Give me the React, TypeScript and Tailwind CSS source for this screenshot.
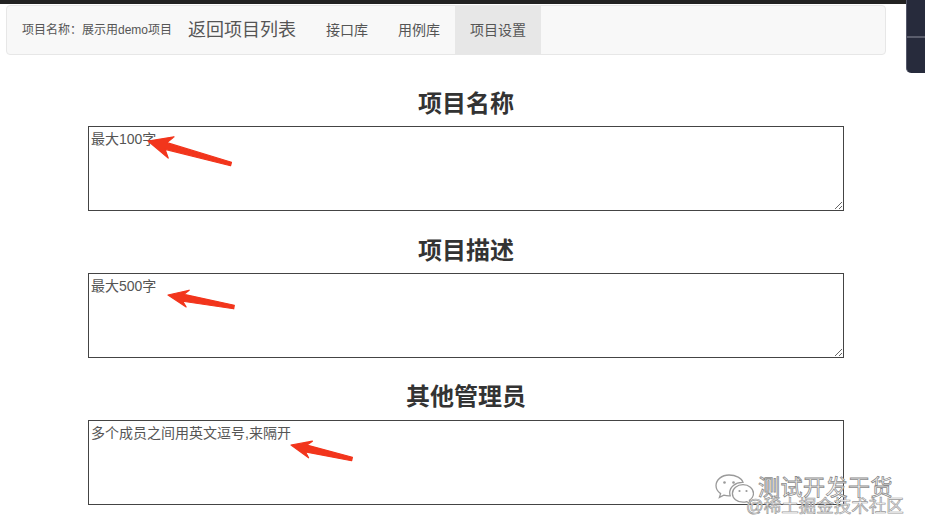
import React from 'react'

const cjk = '[font-family:"Liberation_Sans","Noto_Sans_CJK_SC",sans-serif]'

type Pt = [number, number]

// red annotation arrow, tip -> tail
function arrowPoints(tip: Pt, tail: Pt, head = 24, headW = 20) {
  const dx = tail[0] - tip[0]
  const dy = tail[1] - tip[1]
  const len = Math.hypot(dx, dy)
  const ux = dx / len
  const uy = dy / len
  const vx = -uy
  const vy = ux
  const p = (a: number, b: number) => `${tip[0] + ux * a + vx * b},${tip[1] + uy * a + vy * b}`
  return [
    p(0, 0),
    p(head, headW / 2),
    p(head * 0.78, 3.5),
    p(len, 1.8),
    p(len, -1.8),
    p(head * 0.78, -3.5),
    p(head, -headW / 2),
  ].join(' ')
}

const arrows: { tip: Pt; tail: Pt; head: number; w: number }[] = [
  { tip: [148, 141], tail: [231, 164], head: 24, w: 22 },
  { tip: [168, 295], tail: [234, 307], head: 20, w: 17 },
  { tip: [291, 445], tail: [352, 459], head: 20, w: 17 },
]

const fields = [
  { title: '项目名称', hint: '最大100字', gap: 'mt-[36px] mb-[9px]' },
  { title: '项目描述', hint: '最大500字', gap: 'mt-[27px] mb-[9px]' },
  { title: '其他管理员', hint: '多个成员之间用英文逗号,来隔开', gap: 'mt-[26px] mb-[10px]' },
]

export default function App() {
  return (
    <div className={`relative w-[925px] h-[532px] overflow-hidden bg-white ${cjk}`}>
      <div className="h-[4px] bg-[#222]" />

      {/* navbar */}
      <div className="ml-[6px] mt-px w-[880px] h-[50px] border border-[#e7e7e7] rounded-[4px] bg-[#f8f8f8] flex items-stretch text-[#555]">
        <div className="pl-[15px] flex items-center text-[12px]">项目名称：展示用demo项目</div>
        <div className="ml-[16px] pr-[15px] flex items-center text-[18px]">返回项目列表</div>
        <div className="px-[15px] flex items-center text-[14px]">接口库</div>
        <div className="px-[15px] flex items-center text-[14px]">用例库</div>
        <div className="px-[15px] flex items-center text-[14px] bg-[#e7e7e7]">项目设置</div>
      </div>

      {/* form */}
      <div className="ml-[88px] w-[756px]">
        {fields.map((f) => (
          <div key={f.title}>
            <h3 className={`${f.gap} text-center text-[24px] leading-[26px] font-bold text-[#333]`}>
              {f.title}
            </h3>
            <textarea
              placeholder={f.hint}
              className={`block w-full h-[85px] border border-[#444] px-[2px] py-[2px] text-[14px] leading-[20px] placeholder:text-[#555] outline-none ${cjk}`}
            />
          </div>
        ))}
      </div>

      {/* window edge at right */}
      <div className="absolute right-0 top-0 w-[19px] h-[73px] bg-[#272b3c] rounded-bl-[5px] border-l border-[#55586a] flex flex-col">
        <div className="h-[38px] border-b-2 border-[#5a5d6c]" />
      </div>

      {/* annotation arrows */}
      <svg className="absolute inset-0 pointer-events-none" width="925" height="532">
        {arrows.map((a, i) => (
          <polygon key={i} points={arrowPoints(a.tip, a.tail, a.head, a.w)} fill="#f2351c" strokeLinejoin="round" stroke="#f2351c" strokeWidth="1.2" />
        ))}
      </svg>

      {/* watermark */}
      <div className="absolute left-[714px] top-[472px] w-[40px] h-[34px]">
        <svg width="40" height="34" viewBox="0 0 40 34" fill="white" stroke="#9a9a9a" strokeWidth="1.3">
          <path d="M15 3C7.8 3 2 7.8 2 13.6c0 3.3 1.8 6.1 4.6 8l-1.2 3.8 4.4-2.3c1.6.5 3.4.8 5.2.8.4 0 .8 0 1.2-.1-.3-1-.5-2-.5-3 0-5.800 5.6-10.4 12.5-10.4h.8C27.8 6 21.9 3 15 3Z" />
          <path d="M29 12.6c-5.9 0-10.6 3.9-10.6 8.8s4.7 8.8 10.6 8.8c1.3 0 2.6-.2 3.8-.6l3.6 1.9-1-3.2c2.5-1.6 4.1-4.1 4.1-6.9 0-4.9-4.7-8.8-10.5-8.8Z" />
          <circle cx="10.5" cy="10.5" r="1.3" fill="#9a9a9a" stroke="none" />
          <circle cx="19.5" cy="10.5" r="1.3" fill="#9a9a9a" stroke="none" />
          <circle cx="25.5" cy="19" r="1.1" fill="#9a9a9a" stroke="none" />
          <circle cx="32.5" cy="19" r="1.1" fill="#9a9a9a" stroke="none" />
        </svg>
      </div>
      <div className="absolute left-[758px] top-[475px] text-[22px] leading-[26px] text-white [-webkit-text-stroke:0.8px_#8a8a8a] [letter-spacing:0.5px]">
        测试开发干货
      </div>
      <div className="absolute left-[746px] top-[496px] text-[17.5px] leading-[20px] text-white [-webkit-text-stroke:0.7px_#9a9a9a]">
        @稀土掘金技术社区
      </div>
    </div>
  )
}
